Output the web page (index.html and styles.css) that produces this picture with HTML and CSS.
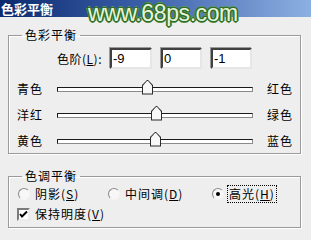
FILE: index.html
```html
<!DOCTYPE html>
<html>
<head>
<meta charset="utf-8">
<link rel="stylesheet" href="styles.css">
</head>
<body>
<div class="window">
  <div class="titlebar">
    <span class="title">色彩平衡</span>
    <span class="watermark">www.68ps.com</span>
  </div>
  <div class="content">
    <fieldset class="group group-balance">
      <legend>色彩平衡</legend>
      <div class="levels-row">
        <span class="levels-label">色阶(<u>L</u>):</span>
        <span class="field field-first">-9</span>
        <span class="field">0</span>
        <span class="field">-1</span>
      </div>
      <div class="slider-row">
        <span class="side-label">青色</span>
        <div class="track"><span class="thumb" style="left:84px"></span></div>
        <span class="side-label right">红色</span>
      </div>
      <div class="slider-row">
        <span class="side-label">洋红</span>
        <div class="track"><span class="thumb" style="left:93px"></span></div>
        <span class="side-label right">绿色</span>
      </div>
      <div class="slider-row">
        <span class="side-label">黄色</span>
        <div class="track"><span class="thumb" style="left:92px"></span></div>
        <span class="side-label right">蓝色</span>
      </div>
    </fieldset>
    <fieldset class="group group-tone">
      <legend>色调平衡</legend>
      <div class="radio-row">
        <span class="option opt-shadow"><span class="radio"></span><span class="opt-text">阴影(<u>S</u>)</span></span>
        <span class="option opt-mid"><span class="radio"></span><span class="opt-text">中间调(<u>D</u>)</span></span>
        <span class="option opt-high"><span class="radio checked"></span><span class="opt-text focus">高光(<u>H</u>)</span></span>
      </div>
      <div class="check-row">
        <span class="checkbox"><svg width="9" height="9" viewBox="0 0 9 9"><path d="M1 4 L3 6.5 L8 1.5" fill="none" stroke="#000" stroke-width="2"/></svg></span>
        <span class="opt-text">保持明度(<u>V</u>)</span>
      </div>
    </fieldset>
  </div>
</div>
</body>
</html>
```
FILE: styles.css
```css
* { box-sizing: border-box; }
html, body { margin: 0; padding: 0; }
body {
  width: 311px;
  height: 240px;
  overflow: hidden;
  background: #eeeeee;
  font-family: "Noto Sans CJK SC", "DejaVu Sans", sans-serif;
  font-size: 12px;
  line-height: 14px;
  color: #000;
}
.window { width: 311px; height: 240px; position: relative; }
.titlebar {
  height: 17px;
  background: linear-gradient(to right, #0c2a6e 0%, #3a5fa8 45%, #8db0e2 100%);
  position: relative;
  display: flex;
  align-items: center;
}
.title {
  color: #fff;
  font-weight: bold;
  font-size: 13px;
  line-height: 17px;
  padding-left: 1px;
}
.watermark {
  position: absolute;
  left: 88px;
  top: 1px;
  font-family: "Liberation Sans", Arial, sans-serif;
  font-size: 23px;
  line-height: 24px;
  color: #e6f5da;
  letter-spacing: -0.4px;
  text-shadow:
    1px 0 #2f6d2a, -1px 0 #2f6d2a, 0 1px #2f6d2a, 0 -1px #2f6d2a,
    1px 1px #2f6d2a, -1px -1px #2f6d2a, 1px -1px #2f6d2a, -1px 1px #2f6d2a,
    2px 0 #5a9448, -2px 0 #5a9448, 0 2px #5a9448, 0 -2px #5a9448;
}
.content {
  padding: 10px 10px 0 8px;
  display: flex;
  flex-direction: column;
  gap: 14px;
}
.group {
  margin: 0;
  width: 293px;
  border: 1px solid #9a9a9a;
  box-shadow: 1px 1px 0 #ffffff, inset 1px 1px 0 #ffffff;
  padding: 0;
}
.group legend {
  margin-left: 13px;
  padding: 0 3px;
  font-size: 12px;
  line-height: 16px;
  letter-spacing: 1px;
}
.group-balance { height: 127px; padding-top: 5px; }
.levels-row {
  display: flex;
  align-items: center;
  height: 21px;
  margin-left: 48px;
}
.levels-label { width: 53px; letter-spacing: 0.5px; }
.field {
  width: 41px;
  height: 21px;
  margin-right: 9px;
  background: #fff;
  border: 2px solid;
  border-color: #404040 #e6e6e6 #e6e6e6 #404040;
  box-shadow: -1px -1px 0 #9a9a9a;
  padding-left: 1px;
  line-height: 17px;
  font-family: "Liberation Sans", Arial, sans-serif;
  font-size: 13px;
}
.field-first { width: 42px; }
.slider-row {
  display: flex;
  align-items: center;
  height: 26px;
  margin-left: 8px;
}
.levels-row + .slider-row { margin-top: 7px; }
.side-label { width: 40px; letter-spacing: 1px; }
.side-label.right { width: auto; margin-left: 14px; }
.track {
  position: relative;
  width: 196px;
  height: 5px;
  background: #fff;
  border: 1px solid #1a1a1a;
  border-bottom-color: #8a8a8a;
  border-right-color: #8a8a8a;
}
.thumb {
  position: absolute;
  top: -8px;
  width: 11px;
  height: 15px;
  background: #2a2a2a;
  clip-path: polygon(50% 0, 100% 36%, 100% 100%, 0 100%, 0 36%);
}
.thumb::after {
  content: "";
  position: absolute;
  left: 1px; top: 1px; right: 1px; bottom: 1px;
  background: #f7f7f7;
  clip-path: polygon(50% 0, 100% 38%, 100% 100%, 0 100%, 0 38%);
}
.group-tone { padding: 1px 0 4px 0; }
.radio-row {
  display: flex;
  align-items: center;
  height: 18px;
  margin-left: 9px;
}
.option { display: flex; align-items: center; }
.opt-shadow { width: 90px; }
.opt-mid { width: 104px; }
.radio {
  width: 12px;
  height: 12px;
  border-radius: 50%;
  border: 1px solid;
  border-color: #8a8a8a #f4f4f4 #f4f4f4 #8a8a8a;
  background: #f7f7f7;
  margin-right: 5px;
  position: relative;
}
.radio.checked::after {
  content: "";
  position: absolute;
  left: 3px; top: 3px;
  width: 4px; height: 4px;
  border-radius: 50%;
  background: #000;
}
.opt-text { letter-spacing: 1px; }
.opt-text.focus { outline: 1px dotted #000; outline-offset: 1px; }
.check-row {
  display: flex;
  align-items: center;
  height: 18px;
  margin-left: 8px;
  margin-top: 2px;
}
.checkbox {
  width: 13px;
  height: 13px;
  background: #fff;
  border: 2px solid;
  border-color: #7a7a7a #ececec #ececec #7a7a7a;
  margin-right: 5px;
  display: flex;
  align-items: center;
  justify-content: center;
}
```
